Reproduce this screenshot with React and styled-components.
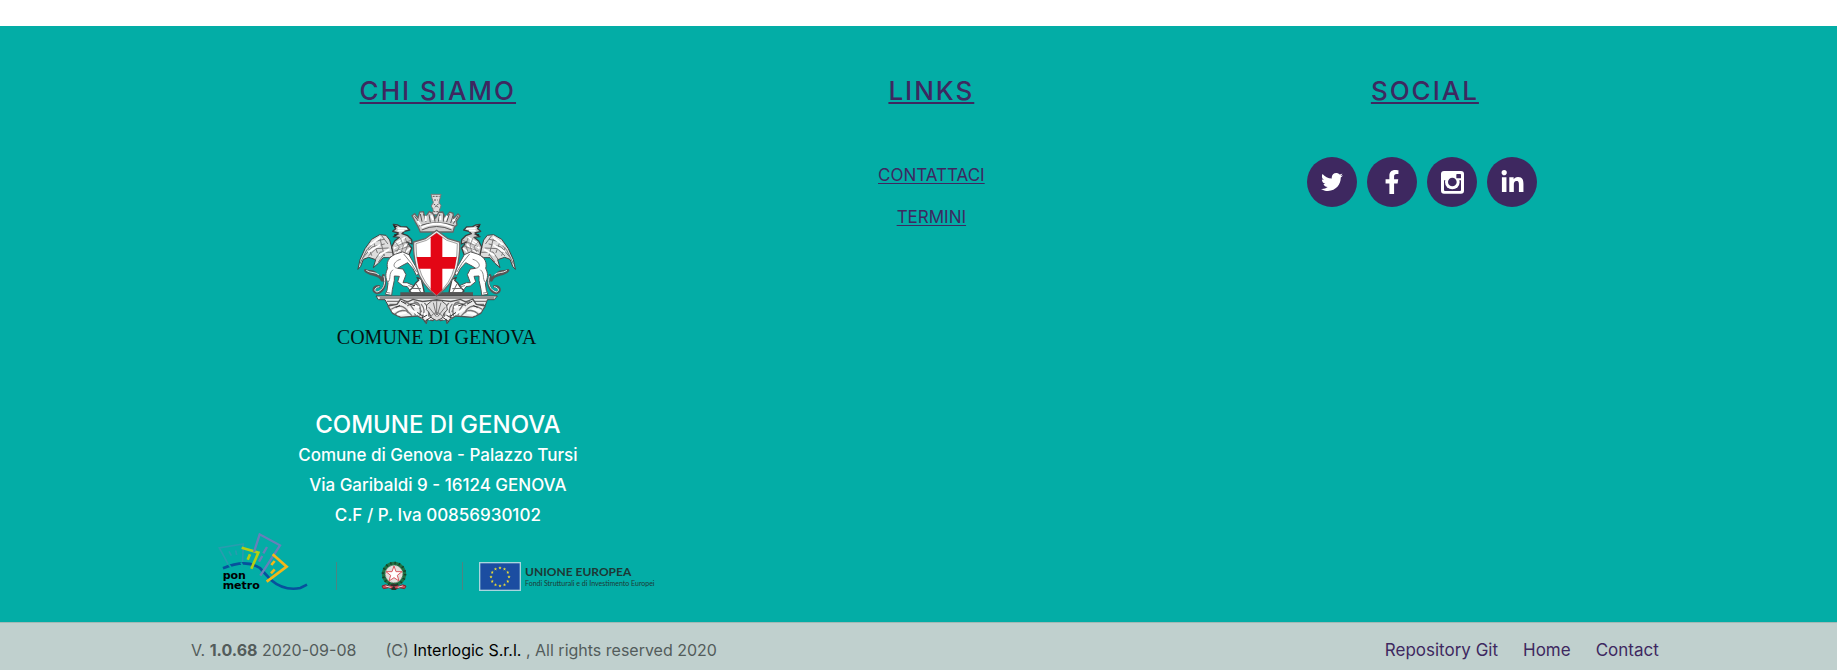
import React from "react";
import styled, { createGlobalStyle } from "styled-components";
import { FaTwitter, FaFacebookF, FaLinkedinIn } from "react-icons/fa";

const teal = "#03ada6";
const purple = "#3e2860";

const GlobalStyle = createGlobalStyle`
  * { box-sizing: border-box; }
  body {
    margin: 0;
    background: #fff;
    font-family: Inter, "Liberation Sans", sans-serif;
    font-size: 16px;
  }
`;

const Footer = styled.footer`
  margin-top: 26px;
`;

const Main = styled.div`
  display: grid;
  grid-template-columns: repeat(3, 1fr);
  padding: 50px 9% 28px 10.4%;
  background: ${teal};
  color: #fff;
`;

const Column = styled.section`
  display: flex;
  flex-direction: column;
  align-items: center;
`;

const Heading = styled.h2`
  margin: 0;
  color: ${purple};
  font-size: 26px;
  font-weight: 500;
  line-height: 30px;
  letter-spacing: 2px;
  text-decoration: underline 2px;
  text-underline-offset: 2px;
`;

const Crest = styled.svg`
  display: block;
  width: 206px;
  height: 160px;
  margin: 84px 0 60px;
`;

const Owner = styled.h3`
  margin: 0;
  font-size: 24px;
  font-weight: 500;
  line-height: 30px;
`;

const Address = styled.address`
  font-size: 17px;
  font-style: normal;
  font-weight: 500;
  line-height: 30px;
  text-align: center;
`;

const Sponsors = styled.div`
  display: flex;
  align-items: flex-end;
  margin-top: 2px;
`;

const PonLogo = styled.svg`
  width: 92px;
  height: 62px;
`;

const Divider = styled.span`
  width: 1px;
  height: 28px;
  background: #4c8582;
  margin: 0 16px 4px 28px;
`;

const Emblem = styled.svg`
  width: 26px;
  height: 30px;
  margin: 0 27px 3px 28px;
`;

const Flag = styled.svg`
  width: 42px;
  height: 29px;
  margin: 0 4px 3px 0;
`;

const Europe = styled.p`
  margin: 0;
  padding: 0 5px 6px 0;
  color: #1d3936;
  font-family: Lato, sans-serif;
  font-size: 7px;
  line-height: 10px;
  white-space: nowrap;

  strong {
    display: block;
    font-size: 12px;
    line-height: 12px;
  }
`;

const LinkList = styled.nav`
  display: flex;
  flex-direction: column;
  align-items: center;
  gap: 22px;
  margin-top: 59px;
`;

const TextLink = styled.a`
  color: ${purple};
  font-size: 17px;
  line-height: 20px;
  text-underline-offset: 2px;
`;

const SocialList = styled.nav`
  display: flex;
  gap: 5px;
  margin-top: 51px;
`;

const SocialLink = styled.a`
  display: flex;
  align-items: center;
  justify-content: center;
  width: 50px;
  height: 50px;
  margin-right: 5px;
  border-radius: 50%;
  background: ${purple};
  color: #fff;
`;

const Bar = styled.div`
  display: flex;
  justify-content: space-between;
  align-items: center;
  min-height: 48px;
  padding: 6px 9.7% 0 10.4%;
  border-top: 1px solid #a3b9b6;
  background: #c0d0ce;
  color: #535c5b;
  line-height: 24px;
`;

const BarGroup = styled.div`
  display: flex;
  gap: ${(p) => p.$gap}px;
  font-size: ${(p) => p.$size}px;
`;

const BarLink = styled.a`
  color: ${(p) => (p.$dark ? "#000" : purple)};
  text-decoration: none;
`;

function Gryphon({ transform }) {
  return (
    <g transform={transform} strokeLinejoin="round" strokeLinecap="round">
      <path d="M112 268L118 240L133 207L153 179L177 165L196 167L207 181L214 207L229 222L206 234L188 234L173 251L158 264L165 240L144 233L128 239L120 260Z" fill="#ddd" stroke="#444" strokeWidth="3" />
      <path d="M118 252L138 211L164 185L190 179M128 233L154 202L191 193M144 228L166 207L203 205M164 239L179 217L213 218M174 246L190 224M183 168L201 192M158 186L170 219M143 205L153 227M178 177L191 228" fill="none" stroke="#777" strokeWidth="3" />
      <path d="M151 194L177 174M145 216L177 196M177 226L204 210" fill="none" stroke="#fff" strokeWidth="6" />
      <path d="M218 134L231 136L240 141L258 142L267 151L251 155L244 162L261 168L273 180L274 193L258 187L273 205L266 224L241 237L218 226L213 202L222 184L236 173L218 171L233 160L216 155L225 147Z" fill="#ccc" stroke="#3c3c3c" strokeWidth="4" />
      <path d="M218 136L231 140L221 145ZM220 164L237 164L223 170Z" fill="#222" />
      <path d="M233 146L257 147M233 153L249 153M226 190L252 174M221 205L247 184M225 220L260 193M242 228L267 207" fill="none" stroke="#fff" strokeWidth="5" />
      <path d="M224 187L236 202L228 217M240 177L248 198L239 226M254 176L261 196L252 222M225 200L270 182M223 214L270 198" fill="none" stroke="#666" strokeWidth="2" />
      <path d="M223 224C203 233 196 250 201 266C194 279 193 295 202 310L199 332L194 344L213 347L215 330L221 302L221 289L236 290L231 306L247 319L260 321L266 330L285 333L279 318L259 309L247 309L256 285L247 268L231 266L242 259L261 249L277 267L287 287L298 281L280 252L265 225L247 217Z" fill="#fff" stroke="#555" strokeWidth="3" />
      <path d="M239 239C220 244 211 264 231 266M202 308C213 296 202 283 216 271M250 224L272 251L287 276M264 318L282 323M196 338L208 340" fill="none" stroke="#888" strokeWidth="3" />
      <path d="M188 290C199 313 188 335 169 340C153 336 158 319 175 320M188 287L184 302C178 280 147 289 134 272C145 280 151 269 164 280" fill="none" stroke="#555" strokeWidth="8" />
      <path d="M190 290C197 313 187 332 169 337C157 333 163 323 175 321M174 285C165 276 150 281 138 273" fill="none" stroke="#e8e8e8" strokeWidth="3" />
      <path d="M266 334L278 321L286 309L294 302L289 293L302 299L308 325L311 340H273Z" fill="#fff" stroke="#444" strokeWidth="4" />
      <path d="M273 326L300 327M287 313L300 338" stroke="#666" strokeWidth="3" />
    </g>
  );
}

function CityCrest() {
  const mirror = "matrix(-1 0 0 1 696 0)";
  return (
    <Crest viewBox="43 31 618 480" role="img" aria-label="Comune di Genova">
      <g stroke="#555" strokeWidth="2">
        <path d="M331 44H361L358 56L355 68L361 78L356 92L361 105H333L338 92L332 79L338 68L334 56Z" fill="#ddd" stroke="#777" strokeWidth="3" />
        <path d="M336 50H357M340 61H351M339 73L355 84M354 72L340 86M338 96H357" fill="none" stroke="#555" strokeWidth="3" strokeDasharray="6 3" />
        <path d="M274 108L282 102L292 115L297 97L308 96L313 113L326 96L336 101L345 115L354 98L366 97L374 114L387 97L397 101L399 116L412 103L418 109L407 125L409 135L401 143L397 157H299L293 143L284 127Z" fill="#cfcfcf" stroke="#666" strokeWidth="4" />
        <path d="M282 110L300 133M299 103L304 126M309 103L316 127M325 104L329 128M340 106L343 126M357 104L353 126M369 104L368 126M386 103L378 127M397 108L390 130M412 109L398 132M294 139Q348 119 402 139M303 151Q348 130 393 151" fill="none" stroke="#555" strokeWidth="3" />
        <path d="M291 124L301 137M315 108V125M332 107L337 121M359 109V122M379 108L373 123M396 124L403 119M303 144Q348 121 395 144" fill="none" stroke="#fff" strokeWidth="6" />
      </g>
      <Gryphon />
      <Gryphon transform={mirror} />
      <path d="M239 338H457V349H239Z" fill="#555" />
      <path d="M166 349H530L521 360H500L494 377H480L470 390H226L216 377H202L193 360H173Z" fill="#eee" stroke="#444" strokeWidth="3" />
      <path d="M177 355H521M199 365H497M206 374H490" fill="none" stroke="#777" strokeWidth="4" />
      {[undefined, mirror].map((transform, i) => (
        <g key={i} transform={transform} strokeLinecap="round" strokeLinejoin="round">
          <path d="M202 379L229 374L240 358L261 367L277 359L306 366L348 360V410L337 423L320 419L317 431L308 419L291 409L240 413L216 401Z" fill="#eee" stroke="#555" strokeWidth="4" />
          <path d="M213 388Q244 367 263 397M224 402Q249 381 273 407M250 366Q276 371 284 406M261 378Q289 358 302 396M281 367Q304 368 298 407M302 374Q318 392 303 416M312 371Q329 384 322 419M325 410Q328 392 338 402" fill="none" stroke="#777" strokeWidth="4" />
          <path d="M217 394L238 388M232 404L255 399M266 389L287 400M278 378L293 382M311 403L326 418M315 383L321 392" fill="none" stroke="#fff" strokeWidth="7" />
          <path d="M242 365L256 373M268 374L282 378M291 399L306 409M305 414L318 407M313 425L330 413M226 383L237 378" fill="none" stroke="#333" strokeWidth="3" />
        </g>
      ))}
      <path d="M348 423L333 415L324 397L317 390L318 376L334 363H362L378 376L380 391L371 399L364 416Z" fill="#ddd" stroke="#555" strokeWidth="3" />
      <path d="M347 411L324 382M347 406L338 369M348 406V365M350 406L361 369M351 411L373 383M330 411Q348 386 367 411" fill="none" stroke="#777" strokeWidth="3" />
      <path d="M279 187L314 177L348 152L382 177L417 187Q419 219 410 260Q397 315 348 349Q300 315 286 260Q277 219 279 187Z" fill="#eee" stroke="#666" strokeWidth="4" />
      <path d="M286 192L318 182L348 160L378 182L410 192Q411 226 401 263Q391 310 348 346Q307 310 295 263Q285 226 286 192Z" fill="#fff" stroke="#777" strokeWidth="2" />
      <path d="M330 173L348 160L365 173V232H408L402 267H365V331L348 347L330 331V267H294L288 232H330Z" fill="#e30615" />
      <text x="348" y="494" textAnchor="middle" fontFamily="Liberation Serif, serif" fontSize="60" fill="#07110f">COMUNE DI GENOVA</text>
    </Crest>
  );
}

function PonMetro() {
  return (
    <PonLogo viewBox="24 21 276 186" role="img" aria-label="PON Metro" fill="none">
      <g stroke="#299caf" strokeWidth="5">
        <path d="M64 124L34 69L106 57L103 126M63 79L70 92M83 76L86 90" />
      </g>
      <path d="M45 130Q113 101 156 129L188 164Q229 199 277 189L297 179" stroke="#07519d" strokeWidth="8" />
      <path d="M61 117L70 128M99 113L105 125" stroke={teal} strokeWidth="5" />
      <path d="M101 68L151 83L130 131M126 88L119 104" stroke="#b6ce13" strokeWidth="8" />
      <path d="M138 81L155 28L216 61L157 152M177 66L166 85M163 93L153 110" stroke="#687fba" strokeWidth="7" />
      <path d="M194 88L236 125L176 170M200 108L190 120M200 133L189 145" stroke="#f3b719" strokeWidth="8" />
      <text x="44" y="163" fontFamily="DejaVu Sans, sans-serif" fontSize="33" fontWeight="700" fill="#000">pon</text>
      <text x="44" y="192" fontFamily="DejaVu Sans, sans-serif" fontSize="33" fontWeight="700" fill="#000">metro</text>
    </PonLogo>
  );
}

function ItalyEmblem() {
  return (
    <Emblem viewBox="0 0 78 90" role="img" aria-label="Repubblica Italiana" fill="none">
      <circle cx="39" cy="39" r="31" stroke="#1e7243" strokeWidth="11" />
      <circle cx="39" cy="39" r="33" stroke="#153f29" strokeWidth="8" strokeDasharray="4 9" />
      <circle cx="39" cy="39" r="26" fill="#e3dfdc" stroke="#978f83" strokeWidth="3" strokeDasharray="5 4" />
      <path d="M39 15L45 32H63L49 43L54 60L39 50L24 60L29 43L15 32H33Z" fill="#fff" stroke="#d9585f" strokeWidth="3" />
      <path d="M3 75Q14 67 24 76L39 69L54 76Q65 67 75 75L71 83L55 80L39 85L23 80L7 83Z" fill="#cf4a58" stroke="#7b282f" strokeWidth="3" />
      <path d="M14 75L29 79M50 79L65 75" stroke="#f2d5d7" strokeWidth="3" />
      <path d="M28 70H50L46 76H32ZM32 82L39 75L47 87H31Z" fill="#27302a" />
    </Emblem>
  );
}

function EuropeanFlag() {
  return (
    <Flag viewBox="0 0 126 87" role="img" aria-label="Unione Europea">
      <rect x="2" y="2" width="122" height="83" fill="#1b4da1" stroke="#a9d5df" strokeWidth="4" />
      {Array.from({ length: 12 }, (_, i) => {
        const angle = (i * Math.PI) / 6;
        return (
          <path
            key={i}
            transform={`translate(${63 + 27 * Math.sin(angle)} ${44 - 27 * Math.cos(angle)})`}
            d="M0-5L1-1H5L2 1L3 5L0 3L-3 5L-2 1L-5-1H-1Z"
            fill="#f0e034"
          />
        );
      })}
    </Flag>
  );
}

function InstagramCamera() {
  return (
    <svg width="23" height="23" viewBox="0 0 69 69" aria-hidden="true">
      <rect width="69" height="68" rx="9" fill="#fff" />
      <path d="M9 28H60V57Q60 60 57 60H12Q9 60 9 57Z" fill={purple} />
      <circle cx="34" cy="33" r="22" fill="#fff" />
      <circle cx="34" cy="33" r="13" fill={purple} />
      <rect x="46" y="9" width="14" height="13" rx="2" fill={purple} />
    </svg>
  );
}

export default function App() {
  return (
    <>
      <GlobalStyle />
      <Footer>
        <Main>
          <Column>
            <Heading>CHI SIAMO</Heading>
            <CityCrest />
            <Owner>COMUNE DI GENOVA</Owner>
            <Address>
              Comune di Genova - Palazzo Tursi
              <br />
              Via Garibaldi 9 - 16124 GENOVA
              <br />
              C.F / P. Iva 00856930102
            </Address>
            <Sponsors>
              <PonMetro />
              <Divider />
              <ItalyEmblem />
              <Divider />
              <EuropeanFlag />
              <Europe>
                <strong>UNIONE EUROPEA</strong>
                Fondi Strutturali e di Investimento Europei
              </Europe>
            </Sponsors>
          </Column>
          <Column>
            <Heading>LINKS</Heading>
            <LinkList aria-label="Links">
              <TextLink href="#contattaci">CONTATTACI</TextLink>
              <TextLink href="#termini">TERMINI</TextLink>
            </LinkList>
          </Column>
          <Column>
            <Heading>SOCIAL</Heading>
            <SocialList aria-label="Social">
              <SocialLink href="#twitter" aria-label="Twitter"><FaTwitter size={22} /></SocialLink>
              <SocialLink href="#facebook" aria-label="Facebook"><FaFacebookF size={24} /></SocialLink>
              <SocialLink href="#instagram" aria-label="Instagram"><InstagramCamera /></SocialLink>
              <SocialLink href="#linkedin" aria-label="LinkedIn"><FaLinkedinIn size={25} /></SocialLink>
            </SocialList>
          </Column>
        </Main>
        <Bar>
          <BarGroup $gap={29} $size={16}>
            <span>V. <b>1.0.68</b> 2020-09-08</span>
            <span>(C) <BarLink $dark href="#interlogic">Interlogic S.r.l.</BarLink> , All rights reserved 2020</span>
          </BarGroup>
          <BarGroup as="nav" $gap={25} $size={17}>
            <BarLink href="#repository">Repository Git</BarLink>
            <BarLink href="#home">Home</BarLink>
            <BarLink href="#contact">Contact</BarLink>
          </BarGroup>
        </Bar>
      </Footer>
    </>
  );
}
